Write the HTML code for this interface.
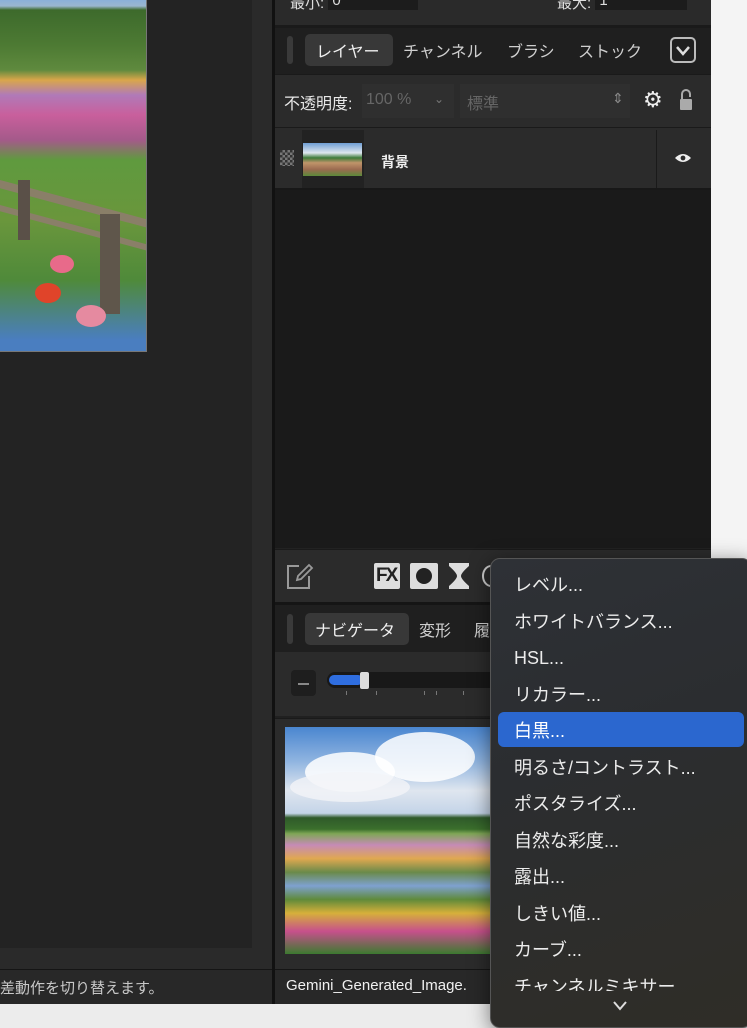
<!DOCTYPE html>
<html><head><meta charset="utf-8"><style>
*{margin:0;padding:0;box-sizing:border-box}
body{width:747px;height:1024px;overflow:hidden;background:#ececec;position:relative;font-family:"Liberation Sans","Noto Sans CJK JP",sans-serif;color:#ddd}
.a{position:absolute}
.t{position:absolute;white-space:nowrap}
</style></head><body>
<div class="a" style="left:0;top:0;width:274px;height:1004px;background:#2a2a2a"></div>
<div class="a" style="left:0;top:0;width:252px;height:948px;background:#232323"></div>
<div class="a" style="left:0;top:0;width:147px;height:352px;border-right:1px solid #777;border-bottom:1px solid #777;overflow:hidden;background:linear-gradient(180deg,#8bb0d8 0,#9ab6cf 6px,#3d6a2c 10px,#4d7a33 45px,#5f8a3e 70px,#d9a64a 80px,#b07ab8 95px,#c95f9c 115px,#a45a8a 140px,#5f9a3e 160px,#6a963c 220px,#4f8a3a 280px,#4a7ec0 340px)">
 <div class="a" style="left:0;top:180px;width:160px;height:8px;background:#8a7f68;transform:rotate(15deg);transform-origin:0 0"></div>
 <div class="a" style="left:0;top:205px;width:160px;height:6px;background:#8a7f68;transform:rotate(15deg);transform-origin:0 0"></div>
 <div class="a" style="left:18px;top:180px;width:12px;height:60px;background:#5a5048"></div>
 <div class="a" style="left:100px;top:214px;width:20px;height:100px;background:#5f564b"></div>
 <div class="a" style="left:35px;top:283px;width:26px;height:20px;border-radius:50%;background:#e0442a"></div>
 <div class="a" style="left:76px;top:305px;width:30px;height:22px;border-radius:50%;background:#e58aa0"></div>
 <div class="a" style="left:50px;top:255px;width:24px;height:18px;border-radius:50%;background:#e86a8a"></div>
</div>
<div class="a" style="left:0;top:969px;width:274px;height:35px;background:#282828;border-top:1px solid #151515"></div>
<div class="t" style="left:0;top:977px;font-size:15px;color:#c8c8c8">差動作を切り替えます。</div>
<div class="a" style="left:272px;top:0;width:3px;height:1004px;background:#111"></div>

<div class="a" style="left:275px;top:0;width:436px;height:1004px;background:#1a1a1a"></div>
<div class="a" style="left:711px;top:0;width:36px;height:1024px;background:#f4f4f4"></div>
<div class="a" style="left:0;top:1004px;width:747px;height:20px;background:#ececec"></div>
<div class="a" style="left:275px;top:0;width:436px;height:25px;background:#2a2a2a"></div>
<div class="t" style="left:290px;top:-8px;font-size:15px;color:#ddd">最小: <span style="display:inline-block;width:90px;height:18px;background:#1c1c1c;vertical-align:top;padding-left:4px">0</span></div>
<div class="t" style="left:557px;top:-8px;font-size:15px;color:#ddd">最大: <span style="display:inline-block;width:92px;height:18px;background:#1c1c1c;vertical-align:top;padding-left:4px">1</span></div>
<div class="a" style="left:275px;top:28px;width:436px;height:46px;background:#1f1f1f"></div>
<div class="a" style="left:287px;top:36px;width:6px;height:28px;border-radius:3px;background:#3a3a3a"></div>
<div class="a" style="left:305px;top:34px;width:88px;height:32px;border-radius:5px;background:#383838"></div>
<div class="t" style="left:316px;top:38px;font-size:16px;color:#f0f0f0">レイヤー</div>
<div class="t" style="left:403px;top:38px;font-size:16px;color:#cfcfcf">チャンネル</div>
<div class="t" style="left:507px;top:38px;font-size:16px;color:#cfcfcf">ブラシ</div>
<div class="t" style="left:578px;top:38px;font-size:16px;color:#cfcfcf">ストック</div>
<div class="a" style="left:670px;top:37px;width:26px;height:26px;border:2px solid #bbb;border-radius:5px"></div>
<svg class="a" style="left:670px;top:37px" width="26" height="26"><path d="M7 10 L13 17 L19 10" stroke="#ddd" stroke-width="2.5" fill="none"/></svg>
<div class="a" style="left:275px;top:75px;width:436px;height:52px;background:#2b2b2b"></div>
<div class="t" style="left:284px;top:90px;font-size:16px;color:#e8e8e8">不透明度:</div>
<div class="a" style="left:362px;top:84px;width:92px;height:34px;background:#2f2f2f"></div>
<div class="t" style="left:366px;top:91px;font-size:16px;color:#666">100 %</div>
<div class="t" style="left:434px;top:92px;font-size:12px;color:#777">⌄</div>
<div class="a" style="left:460px;top:84px;width:170px;height:34px;background:#2f2f2f"></div>
<div class="t" style="left:467px;top:90px;font-size:16px;color:#666">標準</div>
<div class="t" style="left:612px;top:90px;font-size:14px;color:#888">⇕</div>
<div class="t" style="left:643px;top:87px;font-size:22px;color:#eee">⚙</div>
<svg class="a" style="left:678px;top:88px" width="16" height="24"><path d="M4 11 V6 a4 4 0 0 1 8 0 V9" stroke="#aaa" stroke-width="2" fill="none"/><rect x="2" y="11" width="12" height="11" rx="1" fill="#aaa"/></svg>
<div class="a" style="left:275px;top:128px;width:436px;height:62px;background:#2b2b2b;border-bottom:2px solid #181818"></div>
<div class="a" style="left:280px;top:150px;width:14px;height:16px;background:repeating-conic-gradient(#777 0 25%,#333 0 50%) 0 0/5px 5px"></div>
<div class="a" style="left:302px;top:130px;width:62px;height:58px;background:#222"></div>
<div class="a" style="left:303px;top:143px;width:59px;height:33px;background:linear-gradient(180deg,#6f9ed4 0,#dfe7ef 30%,#3e7a3a 45%,#c0946a 60%,#9b6b50 80%,#5c8a3a 100%)"></div>
<div class="t" style="left:381px;top:152px;font-size:14px;color:#f0f0f0;font-weight:bold">背景</div>
<div class="a" style="left:656px;top:130px;width:1px;height:58px;background:#1a1a1a"></div>
<svg class="a" style="left:674px;top:152px" width="18" height="12"><path d="M1 6 Q9 -2 17 6 Q9 14 1 6Z" fill="#eee"/><circle cx="9" cy="6" r="2.4" fill="#2b2b2b"/></svg>
<div class="a" style="left:275px;top:548px;width:436px;height:1px;background:#222"></div>
<div class="a" style="left:275px;top:550px;width:436px;height:52px;background:#2b2b2b"></div>
<svg class="a" style="left:285px;top:562px" width="30" height="30"><path d="M14 4 H3 V26 H24 V14" stroke="#999" stroke-width="2" fill="none"/><path d="M12 18 L13 14 L24 3 L27 6 L16 17 Z" stroke="#999" stroke-width="1.8" fill="none"/></svg>
<div class="a" style="left:374px;top:563px;width:26px;height:26px;background:#ddd;border-radius:2px"></div>
<div class="t" style="left:376px;top:565px;font-size:19px;font-weight:bold;color:#222;letter-spacing:-2px">FX</div>
<div class="a" style="left:410px;top:563px;width:28px;height:26px;background:#ddd;border-radius:2px"></div>
<div class="a" style="left:416px;top:568px;width:16px;height:16px;border-radius:50%;background:#222"></div>
<svg class="a" style="left:448px;top:563px" width="22" height="26"><path d="M1 0 H21 V3 Q13 10 13 13 Q13 16 21 23 V26 H1 V23 Q9 16 9 13 Q9 10 1 3Z" fill="#ddd"/></svg>
<div class="a" style="left:482px;top:565px;width:18px;height:22px;border:2px solid #ccc;border-radius:50%"></div>
<div class="a" style="left:275px;top:602px;width:436px;height:3px;background:#151515"></div>
<div class="a" style="left:275px;top:605px;width:436px;height:47px;background:#1f1f1f"></div>
<div class="a" style="left:287px;top:614px;width:6px;height:30px;border-radius:3px;background:#3a3a3a"></div>
<div class="a" style="left:305px;top:613px;width:104px;height:32px;border-radius:5px;background:#383838"></div>
<div class="t" style="left:315px;top:617px;font-size:16px;color:#f0f0f0">ナビゲータ</div>
<div class="t" style="left:419px;top:617px;font-size:16px;color:#cfcfcf">変形</div>
<div class="t" style="left:474px;top:617px;font-size:16px;color:#cfcfcf">履</div>
<div class="a" style="left:275px;top:652px;width:436px;height:66px;background:#2b2b2b;border-bottom:2px solid #202020"></div>
<div class="a" style="left:291px;top:670px;width:25px;height:26px;border-radius:4px;background:#1e1e1e"></div>
<div class="a" style="left:298px;top:683px;width:11px;height:2px;background:#888"></div>
<div class="a" style="left:327px;top:672px;width:180px;height:16px;border-radius:8px;background:#181818"></div>
<div class="a" style="left:329px;top:675px;width:34px;height:10px;border-radius:5px;background:#2f6ee0"></div>
<div class="a" style="left:360px;top:672px;width:9px;height:17px;border-radius:2px;background:#ddd"></div>
<div class="a" style="left:346px;top:691px;width:1px;height:4px;background:#777;box-shadow:30px 0 #777,78px 0 #777,90px 0 #777,117px 0 #777"></div>
<div class="a" style="left:275px;top:719px;width:436px;height:250px;background:#2b2b2b"></div>
<div class="a" style="left:285px;top:727px;width:210px;height:227px;overflow:hidden;background:linear-gradient(180deg,#4a86d0 0,#8fb4e0 15%,#dfe6ef 28%,#c4d4e8 38%,#2f5a2a 40%,#3b6f2c 45%,#7fa656 47%,#c68bb6 52%,#e0a850 58%,#6a8a4a 64%,#7ea1d0 70%,#5f8a3a 76%,#d6b03a 82%,#c7508c 90%,#3c7a30 100%)">
 <div class="a" style="left:20px;top:25px;width:90px;height:40px;border-radius:50%;background:#fff;opacity:.85"></div>
 <div class="a" style="left:90px;top:5px;width:100px;height:50px;border-radius:50%;background:#fff;opacity:.85"></div>
 <div class="a" style="left:5px;top:45px;width:120px;height:30px;border-radius:50%;background:#f2f4f7;opacity:.8"></div>
</div>
<div class="a" style="left:275px;top:969px;width:436px;height:35px;background:#282828;border-top:1px solid #151515"></div>
<div class="t" style="left:286px;top:977px;font-size:15px;color:#f0f0f0">Gemini_Generated_Image.</div>

<div class="a" style="left:490px;top:558px;width:262px;height:470px;border-radius:10px;background:linear-gradient(160deg,#2e3136 0,#2b2d30 40%,#2f2d27 100%);border:1px solid #555;box-shadow:0 4px 20px rgba(0,0,0,.5)"></div>
<div class="a" style="left:498px;top:712px;width:246px;height:35px;border-radius:6px;background:#2b67cf"></div>
<div style="position:absolute;left:514px;top:567px;font-size:18px;line-height:36.5px;color:#ececec;white-space:nowrap">
<div>レベル...</div><div>ホワイトバランス...</div><div>HSL...</div><div>リカラー...</div><div style="color:#fff">白黒...</div><div>明るさ/コントラスト...</div><div>ポスタライズ...</div><div>自然な彩度...</div><div>露出...</div><div>しきい値...</div><div>カーブ...</div><div style="height:22px;overflow:hidden">チャンネルミキサー</div>
</div>
<svg class="a" style="left:611px;top:1000px" width="18" height="12"><path d="M3 2 L9 9 L15 2" stroke="#ddd" stroke-width="2" fill="none"/></svg>
</body></html>
